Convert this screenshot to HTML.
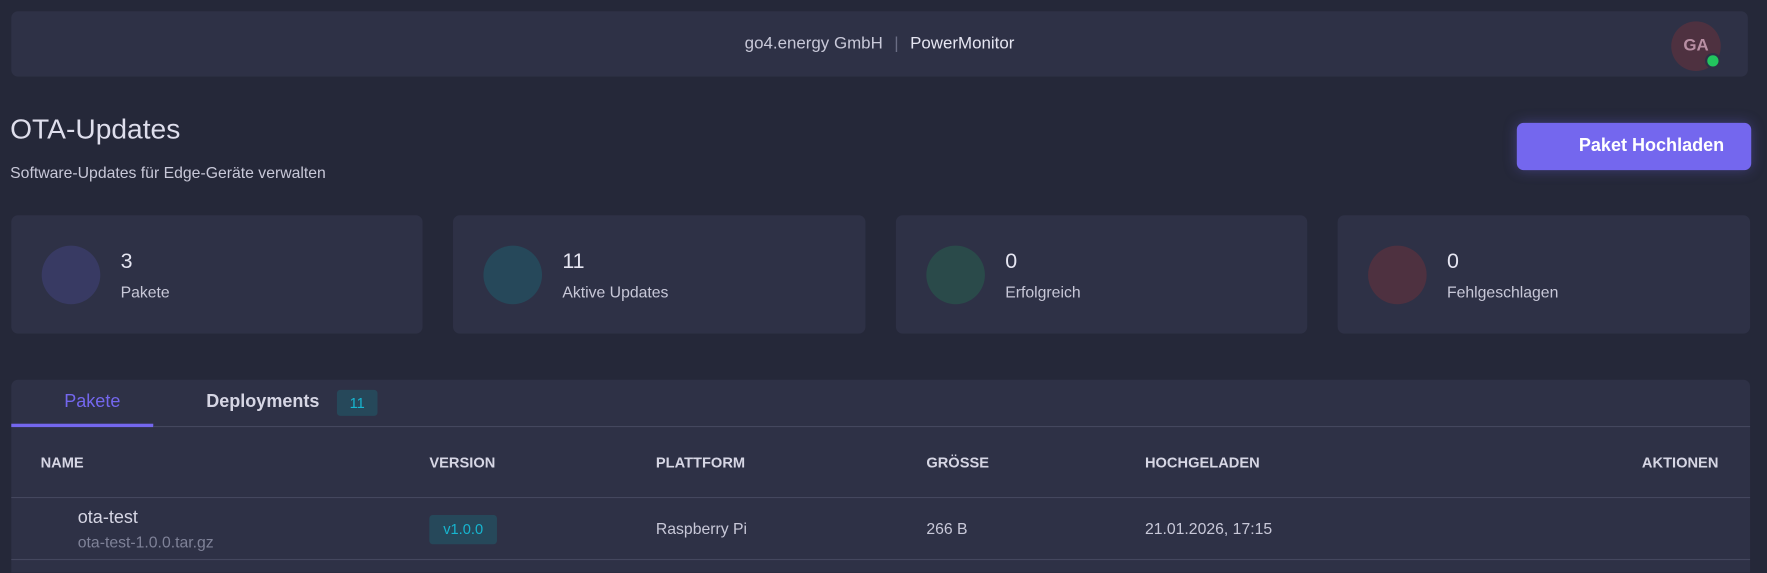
<!DOCTYPE html><html><head><style>
html,body{margin:0;width:1767px;height:573px;background:#252839;overflow:hidden}
#w{position:relative;width:1568px;height:508px;overflow:hidden;transform:scale(1.12691);transform-origin:0 0;font-family:"Liberation Sans",sans-serif;color:#e3e3ef}
.abs{position:absolute}
.card{position:absolute;background:#2e3146;border-radius:6px}
.circ{position:absolute;left:27px;top:27px;width:52px;height:52px;border-radius:50%}
.num{position:absolute;left:97px;top:31px;font-size:19px;color:#e6e6f2}
.lbl{position:absolute;left:97px;top:60px;font-size:14px;color:#c8c8d8}
.th{position:absolute;top:403px;font-size:13px;font-weight:bold;color:#d6d6e4}
.td{position:absolute;top:461px;font-size:14px;color:#c8c8d8}
</style></head><body><div id="w">
<div class="card" style="left:10px;top:10px;width:1541px;height:58px"></div>
<div class="abs" style="left:0;width:1561px;top:30px;text-align:center;font-size:15px;color:#c8c8d8">go4.energy GmbH <span style="color:#6a6d84;margin:0 6px">|</span> <span style="color:#e6e6f2">PowerMonitor</span></div>
<div class="abs" style="left:1483px;top:19px;width:44px;height:44px;border-radius:50%;background:#4e3140;color:#b88fa3;font-weight:bold;font-size:15px;line-height:44px;text-align:center">GA</div>
<div class="abs" style="left:1513px;top:47px;width:10px;height:10px;border-radius:50%;background:#22c55e;border:2px solid #2e3146"></div>
<div class="abs" style="left:9px;top:101px;font-size:25px;color:#dedeec">OTA-Updates</div>
<div class="abs" style="left:9px;top:145px;font-size:14px;color:#c8c8d8">Software-Updates für Edge-Geräte verwalten</div>
<div class="abs" style="left:1346px;top:109px;width:208px;height:42px;border-radius:6px;background:#7467ee;box-shadow:0 0 12px rgba(116,103,238,.35);color:#fff;font-weight:bold;font-size:16px;line-height:42px;text-align:right;box-sizing:border-box;padding-right:24px">Paket Hochladen</div>
<div class="card" style="left:10px;top:191px;width:365px;height:105px"><div class="circ" style="background:#383a63"></div><div class="num">3</div><div class="lbl">Pakete</div></div>
<div class="card" style="left:402px;top:191px;width:366px;height:105px"><div class="circ" style="background:#26485a"></div><div class="num">11</div><div class="lbl">Aktive Updates</div></div>
<div class="card" style="left:795px;top:191px;width:365px;height:105px"><div class="circ" style="background:#2a4a4a"></div><div class="num">0</div><div class="lbl">Erfolgreich</div></div>
<div class="card" style="left:1187px;top:191px;width:366px;height:105px"><div class="circ" style="background:#4e3140"></div><div class="num">0</div><div class="lbl">Fehlgeschlagen</div></div>
<div class="card" style="left:10px;top:337px;width:1543px;height:171px;border-radius:6px 6px 0 0"></div>
<div class="abs" style="left:57px;top:348px;font-size:16px;color:#7467ee">Pakete</div>
<div class="abs" style="left:10px;top:376px;width:126px;height:3px;background:#7467ee"></div>
<div class="abs" style="left:183px;top:348px;font-size:16px;font-weight:bold;color:#d6d6e4">Deployments</div>
<div class="abs" style="left:299px;top:346px;width:36px;height:23px;border-radius:3px;background:#26485a;color:#17b5cf;font-size:13px;line-height:23px;text-align:center">11</div>
<div class="abs" style="left:136px;top:378px;width:1417px;height:1px;background:#44475e"></div>
<div class="th" style="left:36px">NAME</div>
<div class="th" style="left:381px">VERSION</div>
<div class="th" style="left:582px">PLATTFORM</div>
<div class="th" style="left:822px">GRÖSSE</div>
<div class="th" style="left:1016px">HOCHGELADEN</div>
<div class="th" style="left:1457px">AKTIONEN</div>
<div class="abs" style="left:10px;top:441px;width:1543px;height:1px;background:#44475e"></div>
<div class="abs" style="left:69px;top:451px;font-size:16px;color:#d6d6e4">ota-test</div>
<div class="abs" style="left:69px;top:473px;font-size:14px;color:#7f8298">ota-test-1.0.0.tar.gz</div>
<div class="abs" style="left:381px;top:457px;width:60px;height:26px;border-radius:3px;background:#26485a;color:#17b5cf;font-size:13px;line-height:26px;text-align:center">v1.0.0</div>
<div class="td" style="left:582px">Raspberry Pi</div>
<div class="td" style="left:822px">266 B</div>
<div class="td" style="left:1016px">21.01.2026, 17:15</div>
<div class="abs" style="left:10px;top:496px;width:1543px;height:1px;background:#44475e"></div>
</div></body></html>
